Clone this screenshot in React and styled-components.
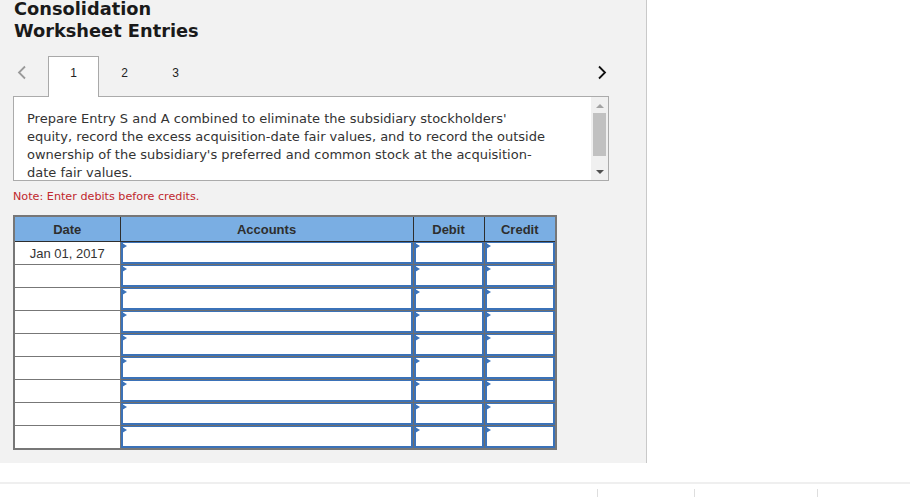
import React from "react";
import styled, { createGlobalStyle } from "styled-components";

const GlobalStyle = createGlobalStyle`
  html, body {
    margin: 0;
    padding: 0;
    background: #ffffff;
  }
  body {
    font-family: "DejaVu Sans", Verdana, sans-serif;
    overflow: hidden;
  }
`;

const Page = styled.div`
  width: 910px;
  height: 497px;
  display: flex;
  flex-direction: column;
`;

const Panel = styled.div`
  width: 647px;
  height: 463px;
  background: #f2f2f2;
  border-right: 1px solid #c9c9c9;
  box-sizing: border-box;
  padding: 0 0 0 13px;
  display: flex;
  flex-direction: column;
`;

const Title = styled.h1`
  margin: -2px 0 0 1px;
  font-family: "DejaVu Sans", Verdana, sans-serif;
  font-weight: bold;
  font-size: 17.8px;
  line-height: 22px;
  color: #1a1a1a;
`;

const TabRow = styled.div`
  margin-top: 14px;
  height: 40px;
  width: 596px;
  display: flex;
  align-items: flex-start;
  position: relative;
  z-index: 1;
`;

const Arrow = styled.div`
  width: ${(p) => p.$w}px;
  height: 40px;
  display: flex;
  justify-content: ${(p) => (p.$right ? "flex-end" : "flex-start")};
  padding: 9px ${(p) => (p.$right ? "2px" : "0")} 0 ${(p) => (p.$right ? "0" : "4px")};
  box-sizing: border-box;
`;

const Spacer = styled.div`
  flex: 1;
`;

const Tab = styled.div`
  width: 51px;
  height: 41px;
  box-sizing: border-box;
  padding-top: 8px;
  text-align: center;
  font-family: "Liberation Sans", Arial, sans-serif;
  font-size: 12px;
  line-height: 16px;
  color: #222;
  background: ${(p) => (p.$active ? "#ffffff" : "transparent")};
  border: 1px solid ${(p) => (p.$active ? "#a9a9a9" : "transparent")};
  border-bottom: none;
`;

const TextBox = styled.div`
  width: 596px;
  height: 85px;
  box-sizing: border-box;
  background: #fff;
  border: 1px solid #ababab;
  display: flex;
`;

const Prompt = styled.p`
  flex: 1;
  margin: 0;
  padding: 13px 40px 0 13px;
  font-size: 13px;
  line-height: 18px;
  color: #333;
`;

const ScrollBar = styled.div`
  width: 17px;
  background: #f0f0f0;
  display: flex;
  flex-direction: column;
  align-items: center;
  padding: 7px 0 6px;
  box-sizing: border-box;
`;

const ScrollThumb = styled.div`
  width: 13px;
  height: 43px;
  margin: 5px 0;
  background: #c1c1c1;
`;

const Tri = styled.div`
  width: 0;
  height: 0;
  border-left: 4px solid transparent;
  border-right: 4px solid transparent;
  ${(p) =>
    p.$up
      ? "border-bottom: 4px solid #a3a3a3;"
      : "border-top: 4px solid #505050;"}
`;

const Note = styled.div`
  margin-top: 9px;
  font-size: 11.2px;
  line-height: 14px;
  color: #c0272d;
`;

const Table = styled.table`
  margin-top: 11px;
  width: 542px;
  border-collapse: collapse;
  table-layout: fixed;
  border: 2px solid #777;
  font-family: "Liberation Sans", Arial, sans-serif;
  font-size: 13px;
`;

const Col = styled.col`
  width: ${(p) => p.$w}px;
`;

const Th = styled.th`
  height: 24px;
  padding: 0;
  background: #7aaee3;
  color: #2e2e2e;
  font-weight: bold;
  border: 1px solid #2e2e2e;
  border-top: 2px solid #777;
  ${(p) => (p.$last ? "border-right: 2px solid #777;" : "")}
  ${(p) => (p.$first ? "border-left: 2px solid #777;" : "")}
`;

const DateCell = styled.td`
  height: 22px;
  padding: 0;
  background: #fff;
  border: 1px solid #777;
  text-align: center;
  color: #333;
`;

const InputCell = styled.td`
  height: 22px;
  padding: 0;
  border: 1px solid #6e6e6e;
  background: #6e6e6e;
`;

const Input = styled.div`
  position: relative;
  height: 22px;
  box-sizing: border-box;
  background: #fff;
  border: 2px solid #3b72b8;
  border-top-width: 1px;

  &::before {
    content: "";
    position: absolute;
    left: -1px;
    top: 0px;
    border-top: 3px solid transparent;
    border-bottom: 3px solid transparent;
    border-left: 5px solid #3b72b8;
  }
`;

const Footer = styled.div`
  margin-top: 19px;
  border-top: 2px solid #efefef;
  display: flex;
  height: 12px;
`;

const FooterTick = styled.div`
  margin-left: ${(p) => p.$x}px;
  margin-top: 5px;
  width: 1px;
  height: 10px;
  background: #dedede;
`;

const Chevron = ({ right }) => (
  <svg width="10" height="15" viewBox="0 0 10 15">
    <path
      d={right ? "M2 1.5 L8 7.5 L2 13.5" : "M8 1.5 L2 7.5 L8 13.5"}
      fill="none"
      stroke={right ? "#111" : "#9a9a9a"}
      strokeWidth="1.8"
    />
  </svg>
);

const rows = ["Jan 01, 2017", "", "", "", "", "", "", "", ""];
const cols = [106, 293, 71, 72];

export default function App() {
  return (
    <Page>
      <GlobalStyle />
      <Panel>
        <Title>
          Consolidation
          <br />
          Worksheet Entries
        </Title>
        <TabRow>
          <Arrow $w={35}>
            <Chevron />
          </Arrow>
          <Tab $active>1</Tab>
          <Tab>2</Tab>
          <Tab>3</Tab>
          <Spacer />
          <Arrow $w={40} $right>
            <Chevron right />
          </Arrow>
        </TabRow>
        <TextBox>
          <Prompt>
            Prepare Entry S and A combined to eliminate the subsidiary
            stockholders' equity, record the excess acquisition-date fair
            values, and to record the outside ownership of the subsidiary's
            preferred and common stock at the acquisition-date fair values.
          </Prompt>
          <ScrollBar>
            <Tri $up />
            <ScrollThumb />
            <Spacer />
            <Tri />
          </ScrollBar>
        </TextBox>
        <Note>Note: Enter debits before credits.</Note>
        <Table>
          <colgroup>
            {cols.map((w, i) => (
              <Col key={i} $w={w} />
            ))}
          </colgroup>
          <thead>
            <tr>
              <Th $first>Date</Th>
              <Th>Accounts</Th>
              <Th>Debit</Th>
              <Th $last>Credit</Th>
            </tr>
          </thead>
          <tbody>
            {rows.map((d, i) => (
              <tr key={i}>
                <DateCell>{d}</DateCell>
                <InputCell>
                  <Input />
                </InputCell>
                <InputCell>
                  <Input />
                </InputCell>
                <InputCell>
                  <Input />
                </InputCell>
              </tr>
            ))}
          </tbody>
        </Table>
      </Panel>
      <Footer>
        <FooterTick $x={597} />
        <FooterTick $x={96} />
        <FooterTick $x={122} />
      </Footer>
    </Page>
  );
}
